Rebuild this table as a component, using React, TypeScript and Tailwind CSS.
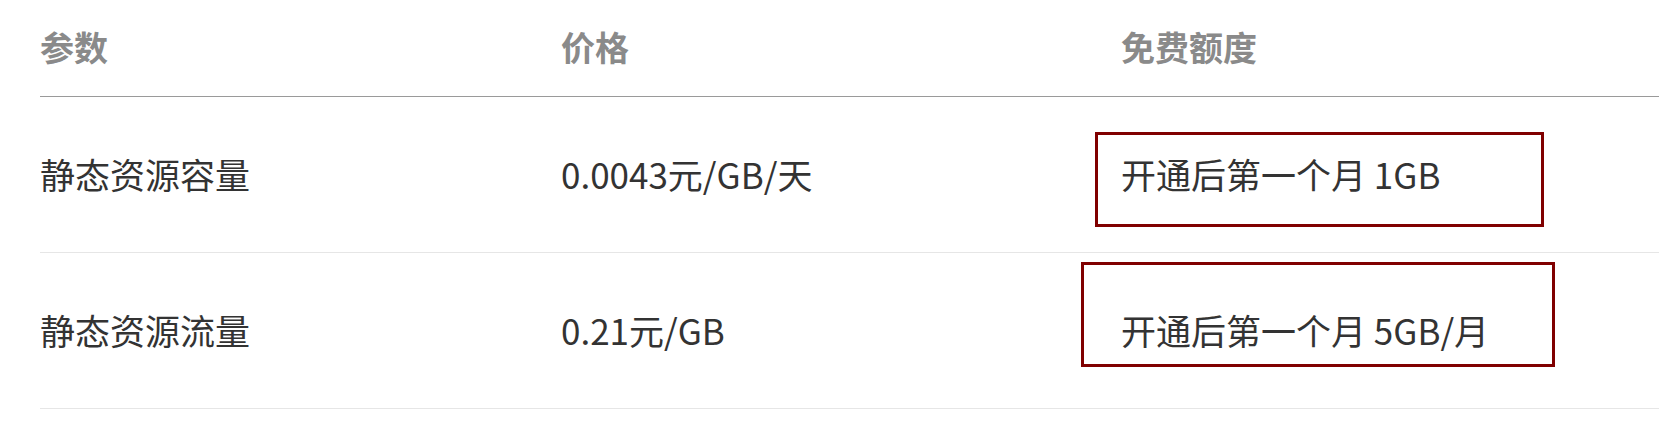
const rows = [
  { name: '静态资源容量', price: '0.0043元/GB/天', free: '开通后第一个月 1GB' },
  { name: '静态资源流量', price: '0.21元/GB', free: '开通后第一个月 5GB/月' },
];

export default function App() {
  return (
    <div
      className="relative h-[428px] w-[1659px] overflow-hidden bg-white pl-[40px]"
      style={{ fontFamily: '"Noto Sans CJK SC", "Noto Sans", sans-serif' }}
    >
      {/* Header */}
      <div className="grid h-[97px] grid-cols-[521px_560px_1fr] items-center border-b border-[#9a9a9a] pb-[4px] text-[34px] font-bold text-[#8a8a8a]">
        <div>参数</div>
        <div>价格</div>
        <div>免费额度</div>
      </div>

      {/* Body */}
      {rows.map((r) => (
        <div
          key={r.name}
          className="grid h-[156px] grid-cols-[521px_560px_1fr] items-center border-b border-[#e6e6e6] text-[35px] text-[#333333]"
        >
          <div>{r.name}</div>
          <div>{r.price}</div>
          <div>{r.free}</div>
        </div>
      ))}

      {/* Annotation boxes */}
      <div className="pointer-events-none absolute left-[1095px] top-[132px] h-[95px] w-[449px] border-[3px] border-[#800000]" />
      <div className="pointer-events-none absolute left-[1081px] top-[262px] h-[105px] w-[474px] border-[3px] border-[#800000]" />
    </div>
  );
}
